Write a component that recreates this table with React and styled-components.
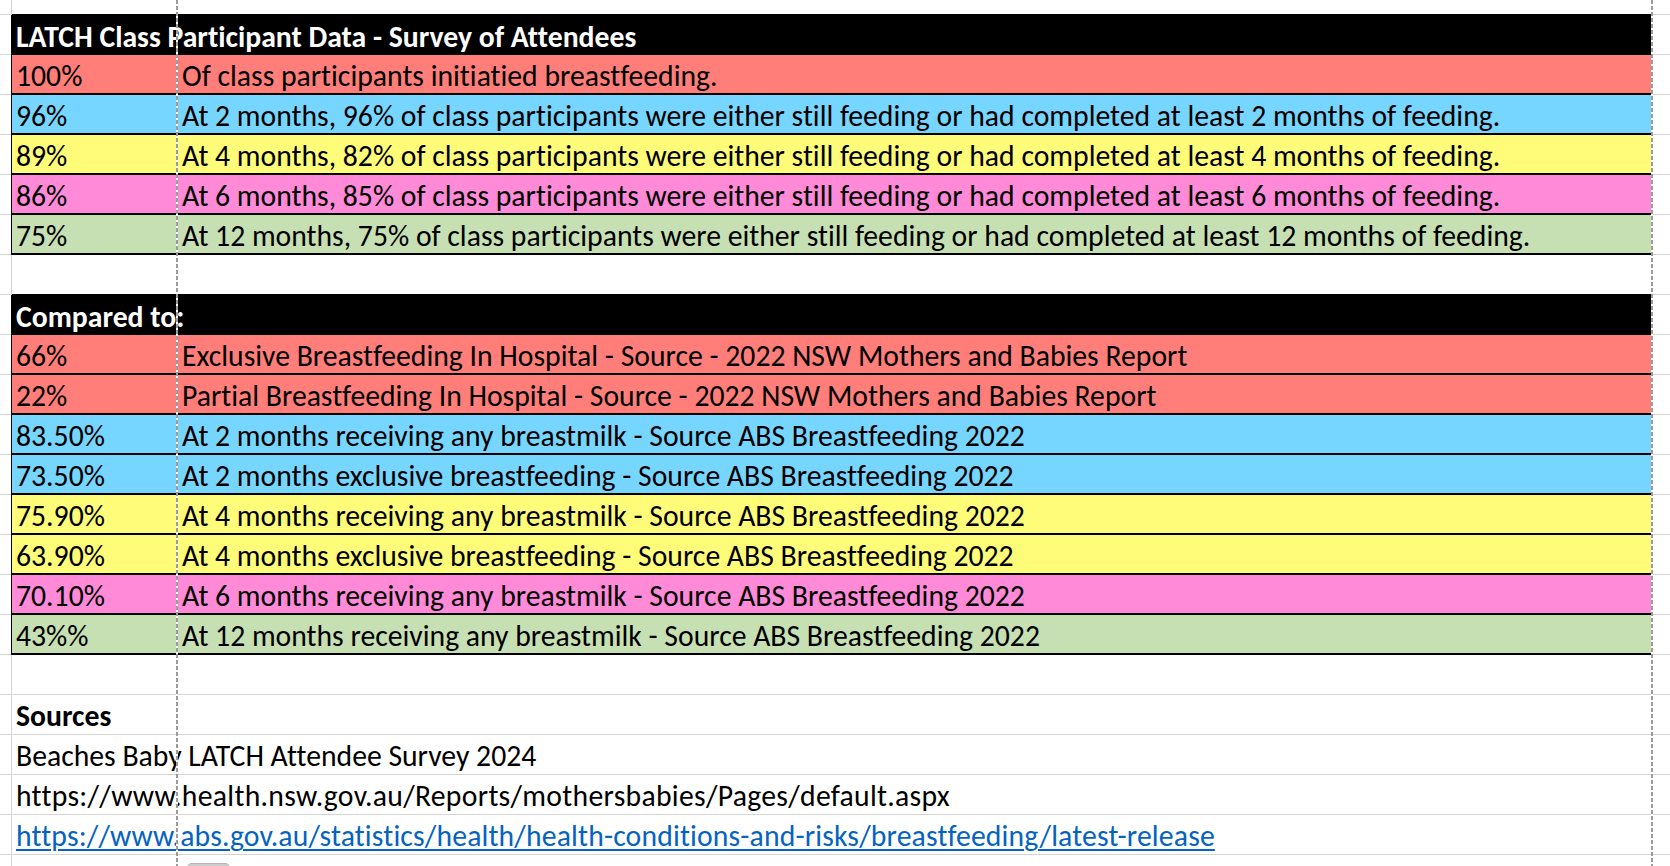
import React from "react";
import styled, { createGlobalStyle } from "styled-components";

const GRID = "#d4d4d4";

const Global = createGlobalStyle`
  html, body { margin: 0; padding: 0; background: #fff; }
  body { overflow: hidden; }
`;

const Page = styled.div`
  position: relative;
  width: 1670px;
  height: 866px;
  overflow: hidden;
  background: #fff;
  font-family: Carlito, Calibri, Lato, sans-serif;
  font-size: 29.7px;
  font-variant-ligatures: none;
  color: #000;
`;

const Sheet = styled.div`
  display: flex;
  flex-direction: column;
`;

const Row = styled.div`
  display: grid;
  grid-template-columns: 12px 165px 1475px 18px;
  height: ${(p) => p.$h || 40}px;
  flex: none;
`;

const Gutter = styled.div`
  box-sizing: border-box;
  border-right: 1px solid ${GRID};
  border-bottom: 1px solid ${GRID};
`;

const Tail = styled.div`
  box-sizing: border-box;
  border-bottom: 1px solid ${GRID};
`;

const Cell = styled.div`
  box-sizing: border-box;
  display: flex;
  align-items: flex-end;
  padding: 0 0 2px ${(p) => (p.$col === "a" ? 4 : 5)}px;
  border-bottom: 1px solid ${GRID};
  white-space: nowrap;
  overflow: ${(p) => (p.$spill ? "visible" : "hidden")};
  line-height: 1;
  font-weight: ${(p) => (p.$bold ? 700 : 400)};
  letter-spacing: ${(p) => p.$track || 0}px;
  position: relative;
  z-index: ${(p) => (p.$spill ? 1 : 0)};
`;

const Band = styled.div`
  grid-column: 2 / 4;
  box-sizing: border-box;
  display: grid;
  grid-template-columns: 165px 1fr;
  background: ${(p) => p.$bg};
  color: ${(p) => (p.$head ? "#fff" : "#000")};
  font-weight: ${(p) => (p.$head ? 700 : 400)};
  border-bottom: ${(p) => (p.$head ? "none" : "2px solid #000")};
  box-shadow: -1px 0 0 #000,
    ${(p) => (p.$head ? "0 -1px 0 #000" : "0 0 0 transparent")};
  position: relative;
`;

const BandText = styled.div`
  grid-column: ${(p) => (p.$span ? "1 / 3" : "auto")};
  display: flex;
  align-items: flex-end;
  padding: 0 0 ${(p) => (p.$head ? 2 : 1)}px
    ${(p) => (p.$col === "a" ? 4 : 5)}px;
  white-space: nowrap;
  overflow: hidden;
  line-height: 1;
`;

const Link = styled.a`
  color: #0563c1;
  text-decoration: underline;
  text-decoration-thickness: 1.5px;
  text-underline-offset: 3px;
`;

const PageBreak = styled.div`
  position: absolute;
  top: 0;
  bottom: 0;
  left: ${(p) => p.$x}px;
  width: 2px;
  background: repeating-linear-gradient(
    to bottom,
    #9b9b9b 0px,
    #9b9b9b 4px,
    #ffffff 4px,
    #ffffff 6px
  );
  z-index: 5;
`;

const Pill = styled.div`
  width: 43px;
  height: 10px;
  margin: 8px 0 0 10px;
  border-radius: 5px;
  background: #cdcdcd;
  border-top: 1px solid #b5b5b5;
`;

const COLORS = {
  salmon: "#FF7E79",
  sky: "#76D6FF",
  banana: "#FFFC79",
  carnation: "#FF8AD8",
  green: "#C6E0B4",
  black: "#000",
};

const table1 = [
  ["100%", "Of class participants initiatied breastfeeding.", "salmon"],
  ["96%", "At 2 months, 96% of class participants were either still feeding or had completed at least 2 months of feeding.", "sky"],
  ["89%", "At 4 months, 82% of class participants were either still feeding or had completed at least 4 months of feeding.", "banana"],
  ["86%", "At 6 months, 85% of class participants were either still feeding or had completed at least 6 months of feeding.", "carnation"],
  ["75%", "At 12 months, 75% of class participants were either still feeding or had completed at least 12 months of feeding.", "green"],
];

const table2 = [
  ["66%", "Exclusive Breastfeeding In Hospital - Source - 2022 NSW Mothers and Babies Report", "salmon"],
  ["22%", "Partial Breastfeeding In Hospital - Source - 2022 NSW Mothers and Babies Report", "salmon"],
  ["83.50%", "At 2 months receiving any breastmilk - Source ABS Breastfeeding 2022", "sky"],
  ["73.50%", "At 2 months exclusive breastfeeding - Source ABS Breastfeeding 2022", "sky"],
  ["75.90%", "At 4 months receiving any breastmilk - Source ABS Breastfeeding 2022", "banana"],
  ["63.90%", "At 4 months exclusive breastfeeding - Source ABS Breastfeeding 2022", "banana"],
  ["70.10%", "At 6 months receiving any breastmilk - Source ABS Breastfeeding 2022", "carnation"],
  ["43%%", "At 12 months receiving any breastmilk - Source ABS Breastfeeding 2022", "green"],
];

function HeaderRow({ title }) {
  return (
    <Row>
      <Gutter />
      <Band $bg={COLORS.black} $head>
        <BandText $span $col="a" $head>
          {title}
        </BandText>
      </Band>
      <Tail />
    </Row>
  );
}

function DataRow({ value, text, color }) {
  return (
    <Row>
      <Gutter />
      <Band $bg={COLORS[color]}>
        <BandText $col="a">{value}</BandText>
        <BandText $col="b">{text}</BandText>
      </Band>
      <Tail />
    </Row>
  );
}

function PlainRow({ a, b, spill, bold, h, track }) {
  return (
    <Row $h={h}>
      <Gutter />
      <Cell $col="a" $spill={spill} $bold={bold} $track={track}>
        {a}
      </Cell>
      <Cell $col="b">{b}</Cell>
      <Tail />
    </Row>
  );
}

export default function App() {
  return (
    <Page>
      <Global />
      <Sheet>
        <PlainRow h={15} />
        <HeaderRow title="LATCH Class Participant Data - Survey of Attendees" />
        {table1.map(([v, t, c]) => (
          <DataRow key={v + t} value={v} text={t} color={c} />
        ))}
        <PlainRow />
        <HeaderRow title="Compared to:" />
        {table2.map(([v, t, c]) => (
          <DataRow key={v + t} value={v} text={t} color={c} />
        ))}
        <PlainRow />
        <PlainRow a="Sources" bold />
        <PlainRow spill a="Beaches Baby LATCH Attendee Survey 2024" />
        <PlainRow
          spill
          track={0.3}
          a="https://www.health.nsw.gov.au/Reports/mothersbabies/Pages/default.aspx"
        />
        <PlainRow
          spill
          track={0.16}
          a={
            <Link href="#">
              https://www.abs.gov.au/statistics/health/health-conditions-and-risks/breastfeeding/latest-release
            </Link>
          }
        />
        <Row $h={11}>
          <Gutter />
          <div />
          <div>
            <Pill />
          </div>
          <div />
        </Row>
      </Sheet>
      <PageBreak $x={176} />
      <PageBreak $x={1651} />
    </Page>
  );
}
